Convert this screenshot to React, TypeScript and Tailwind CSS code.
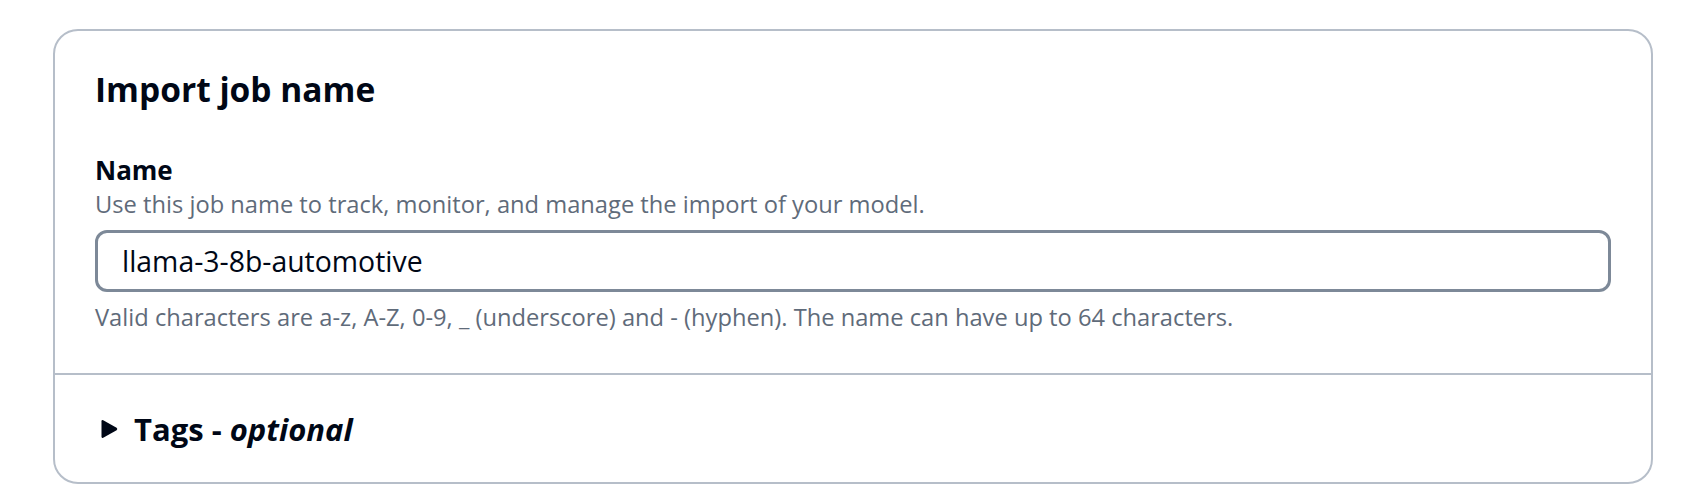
export default function App() {
  return (
    <div className="min-h-[504px] w-[1700px] bg-white pt-[29px] pl-[53px] font-['Open_Sans','Noto_Sans',sans-serif]">
      <div className="w-[1600px] rounded-[25px] border-2 border-[#b6bec9] bg-white">
        <div className="px-[40px] pt-[38px] pb-[42px]">
          <h2 className="text-[33.5px] leading-[40px] font-bold text-[#000716]">Import job name</h2>

          <div className="mt-[46px]">
            <label className="block text-[26px] leading-[30px] font-bold text-[#000716]">Name</label>
            <p className="mt-[5px] text-[23.7px] leading-[28px] text-[#5f6b7a]">
              Use this job name to track, monitor, and manage the import of your model.
            </p>
            <div className="mt-[12px] h-[62px] rounded-[12px] border-[3px] border-[#7d8998] pl-[24px] pt-[13px]">
              <span className="block text-[28.4px] leading-[30px] text-[#000716]">llama-3-8b-automotive</span>
            </div>
            <p className="mt-[11px] text-[23.7px] leading-[28px] text-[#5f6b7a]">
              Valid characters are a-z, A-Z, 0-9, _ (underscore) and - (hyphen). The name can have up to 64 characters.
            </p>
          </div>
        </div>

        <div className="border-t-2 border-[#b6bec9] px-[40px] pt-[36px] pb-[35px]">
          <button className="flex items-center gap-[16px] text-[31px] leading-[36px] font-bold text-[#000716]">
            <svg width="17" height="20" viewBox="0 0 17 20" className="ml-[6px]">
              <path d="M2.2 1.3 L15.6 8.7 Q17 10 15.6 11.3 L2.2 18.7 Q0.5 19.5 0.5 17.6 L0.5 2.4 Q0.5 0.5 2.2 1.3 Z" fill="#000716" />
            </svg>
            <span>
              Tags - <i className="italic">optional</i>
            </span>
          </button>
        </div>
      </div>
    </div>
  );
}
